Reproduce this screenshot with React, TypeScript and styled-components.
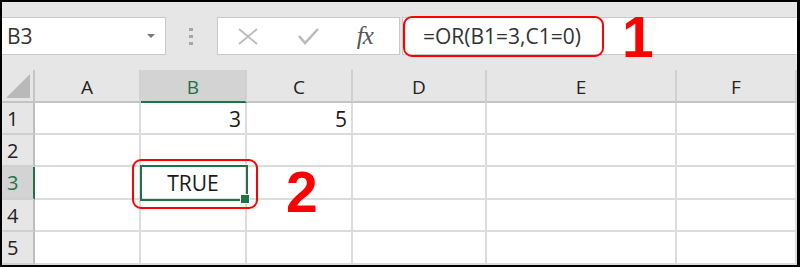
import React from "react";
import styled, { createGlobalStyle, css } from "styled-components";

const GlobalStyle = createGlobalStyle`
  html, body {
    margin: 0;
    padding: 0;
    background: #fff;
  }
  * {
    box-sizing: border-box;
  }
`;

const Frame = styled.div`
  width: 800px;
  height: 267px;
  border-style: solid;
  border-color: #000;
  border-width: 2px 3px 2px 2px;
  background: #e6e6e6;
  display: flex;
  flex-direction: column;
  overflow: hidden;
  font-family: "Open Sans", "Noto Sans", sans-serif;
  color: #222;
`;

const Toolbar = styled.div`
  height: 68px;
  flex: none;
  display: flex;
  align-items: flex-start;
  padding-top: 15px;
`;

const NameBox = styled.div`
  width: 164px;
  height: 38px;
  background: #fff;
  border: 1px solid #c9c9c9;
  border-left: none;
  display: flex;
  align-items: center;
  justify-content: space-between;
  padding: 0 10px 0 5px;
  font-size: 21px;
  color: #333;
`;

const DropArrow = styled.span`
  width: 0;
  height: 0;
  border-left: 4px solid transparent;
  border-right: 4px solid transparent;
  border-top: 4px solid #777;
`;

const Grip = styled.div`
  width: 4px;
  height: 38px;
  margin: 0 24px 0 23px;
  display: flex;
  flex-direction: column;
  justify-content: center;
  gap: 4px;

  span {
    width: 4px;
    height: 3px;
    background: #a6a6a6;
  }
`;

const FuncBox = styled.div`
  width: 183px;
  height: 38px;
  background: #fff;
  border: 1px solid #c9c9c9;
  display: grid;
  grid-template-columns: 1fr 1fr 1fr;
  align-items: center;
  justify-items: center;
`;

const Fx = styled.span`
  font-family: "Liberation Serif", "DejaVu Serif", serif;
  font-style: italic;
  font-size: 25px;
  color: #555;
  margin-left: -8px;
  letter-spacing: -1px;
`;

const FormulaBar = styled.div`
  flex: 1;
  height: 38px;
  margin-left: 2px;
  background: #fff;
  border: 1px solid #c9c9c9;
  border-right: none;
  display: flex;
  align-items: center;
`;

const FormulaMark = styled.div`
  width: 201px;
  height: 41px;
  flex: none;
  border: 2px solid #f00;
  border-radius: 9px;
  display: flex;
  align-items: center;
  padding-left: 18px;
  font-size: 21px;
  color: #333;
`;

const BigNumber = styled.span`
  font-family: "Liberation Sans", Arial, sans-serif;
  font-weight: 700;
  font-size: 57px;
  line-height: 1;
  color: #f00;
`;

const StepOne = styled(BigNumber)`
  margin-left: 18px;
  margin-top: 2px;
`;

const Sheet = styled.div`
  flex: 1;
  display: grid;
  grid-template-columns: 33px 106px 106px 106px 134px 190px 1fr;
  grid-template-rows: 33px 32px 32px 33px 32px 1fr;
  background: #fff;
`;

const Corner = styled.div`
  position: relative;
  background: #e6e6e6;
  border-right: 2px solid #c4c4c4;
  border-bottom: 2px solid #c4c4c4;

  &::after {
    content: "";
    position: absolute;
    right: 3px;
    bottom: 3px;
    border-left: 24px solid transparent;
    border-bottom: 24px solid #b9b9b9;
  }
`;

const ColHeader = styled.div<{ $active?: boolean }>`
  background: ${(p) => (p.$active ? "#d3d3d3" : "#e6e6e6")};
  border-right: 2px solid #d0d0d0;
  border-bottom: 2px solid ${(p) => (p.$active ? "#217346" : "#c4c4c4")};
  display: flex;
  align-items: center;
  justify-content: center;
  padding-top: 2px;
  font-size: 19px;
  color: ${(p) => (p.$active ? "#217346" : "#222")};
`;

const RowHeader = styled.div<{ $active?: boolean }>`
  background: ${(p) => (p.$active ? "#d3d3d3" : "#e6e6e6")};
  border-right: 2px solid ${(p) => (p.$active ? "#217346" : "#bdbdbd")};
  border-bottom: 2px solid #d0d0d0;
  display: flex;
  align-items: center;
  padding-left: 5px;
  font-size: 20px;
  color: ${(p) => (p.$active ? "#217346" : "#222")};
`;

const Cell = styled.div<{ $align?: "left" | "right" | "center"; $selected?: boolean }>`
  position: ${(p) => (p.$selected ? "relative" : "static")};
  border-right: 2px solid #dcdcdc;
  border-bottom: 2px solid #dcdcdc;
  display: flex;
  align-items: center;
  justify-content: ${(p) =>
    p.$align === "right" ? "flex-end" : p.$align === "center" ? "center" : "flex-start"};
  padding: 1px 4px 0;
  font-size: 21px;
  color: #1a1a1a;

  ${(p) =>
    p.$selected &&
    css`
      &::before {
        content: "";
        position: absolute;
        left: -1px;
        top: -2px;
        right: -3px;
        bottom: -3px;
        border: 2px solid #217346;
      }
      &::after {
        content: "";
        position: absolute;
        right: -5px;
        bottom: -6px;
        width: 8px;
        height: 8px;
        background: #217346;
        border: 1px solid #fff;
      }
    `}
`;

const CellMark = styled.div`
  position: absolute;
  left: -9px;
  top: -8px;
  width: 126px;
  height: 50px;
  border: 2px solid #f00;
  border-radius: 9px;
  z-index: 2;
`;

const StepTwo = styled(BigNumber)`
  position: absolute;
  left: 145px;
  top: -3px;
  z-index: 2;
`;

const XIcon = () => (
  <svg width="20" height="17" viewBox="0 0 20 17">
    <path d="M1 1 L19 16 M19 1 L1 16" stroke="#bababa" strokeWidth="1.8" fill="none" />
  </svg>
);

const CheckIcon = () => (
  <svg width="21" height="17" viewBox="0 0 21 17">
    <path d="M1 8 L7 15 L20 1" stroke="#bababa" strokeWidth="2.5" fill="none" />
  </svg>
);

const columns = ["A", "B", "C", "D", "E", "F"];

const data: Record<string, string> = {
  B1: "3",
  C1: "5",
  B3: "TRUE",
};

const App: React.FC = () => {
  return (
    <>
      <GlobalStyle />
      <Frame>
        <Toolbar>
          <NameBox>
            B3
            <DropArrow />
          </NameBox>
          <Grip>
            <span />
            <span />
            <span />
          </Grip>
          <FuncBox>
            <XIcon />
            <CheckIcon />
            <Fx>fx</Fx>
          </FuncBox>
          <FormulaBar>
            <FormulaMark>=OR(B1=3,C1=0)</FormulaMark>
            <StepOne>1</StepOne>
          </FormulaBar>
        </Toolbar>
        <Sheet>
          <Corner />
          {columns.map((c) => (
            <ColHeader key={c} $active={c === "B"}>
              {c}
            </ColHeader>
          ))}
          {[1, 2, 3, 4, 5].map((r) => (
            <React.Fragment key={r}>
              <RowHeader $active={r === 3}>{r}</RowHeader>
              {columns.map((c) => {
                const ref = `${c}${r}`;
                const selected = ref === "B3";
                return (
                  <Cell
                    key={ref}
                    $align={selected ? "center" : "right"}
                    $selected={selected}
                  >
                    {data[ref]}
                    {selected && (
                      <>
                        <CellMark />
                        <StepTwo>2</StepTwo>
                      </>
                    )}
                  </Cell>
                );
              })}
            </React.Fragment>
          ))}
        </Sheet>
      </Frame>
    </>
  );
};

export default App;
